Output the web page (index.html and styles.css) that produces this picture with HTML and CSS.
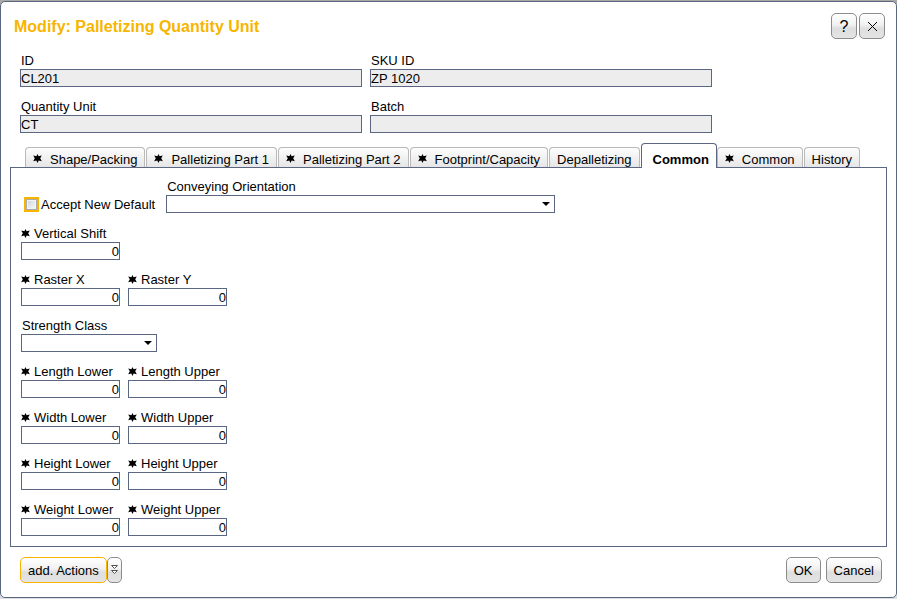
FILE: index.html
```html
<!DOCTYPE html>
<html lang="en">
<head>
<meta charset="utf-8">
<title>Modify: Palletizing Quantity Unit</title>
<link rel="stylesheet" href="styles.css">
</head>
<body>
<svg class="defs" aria-hidden="true">
  <symbol id="star" viewBox="0 0 9 9"><path d="M4.5 0 L5.6 2.2 L8.8 1.6 L7.2 4.3 L8.8 7.2 L5.7 6.6 L4.5 9 L3.3 6.6 L.2 7.2 L1.8 4.3 L.2 1.6 L3.4 2.2 Z"/></symbol>
</svg>
<main class="dialog">
  <header class="titlebar">
    <h1 class="title">Modify: Palletizing Quantity Unit</h1>
    <div class="window-buttons">
      <button class="btn btn-icon" type="button">?</button>
      <button class="btn btn-icon" type="button" aria-label="Close"><svg class="close" viewBox="0 0 11 11"><path d="M1 1 L10 10 M10 1 L1 10"/></svg></button>
    </div>
  </header>

  <form class="form">
    <div class="summary">
      <div class="field"><label for="id">ID</label><input id="id" type="text" value="CL201" readonly></div>
      <div class="field"><label for="sku">SKU ID</label><input id="sku" type="text" value="ZP 1020" readonly></div>
      <div class="field"><label for="qu">Quantity Unit</label><input id="qu" type="text" value="CT" readonly></div>
      <div class="field"><label for="batch">Batch</label><input id="batch" type="text" readonly></div>
    </div>

    <div class="tabs" role="tablist">
      <button class="tab" type="button" role="tab"><svg class="star"><use href="#star"/></svg>Shape/Packing</button>
      <button class="tab" type="button" role="tab"><svg class="star"><use href="#star"/></svg>Palletizing Part 1</button>
      <button class="tab" type="button" role="tab"><svg class="star"><use href="#star"/></svg>Palletizing Part 2</button>
      <button class="tab" type="button" role="tab"><svg class="star"><use href="#star"/></svg>Footprint/Capacity</button>
      <button class="tab" type="button" role="tab">Depalletizing</button>
      <button class="tab tab-active" type="button" role="tab" aria-selected="true">Common</button>
      <button class="tab" type="button" role="tab"><svg class="star"><use href="#star"/></svg>Common</button>
      <button class="tab" type="button" role="tab">History</button>
    </div>

    <section class="panel">
      <div class="row row-first">
        <label class="check"><input type="checkbox">Accept New Default</label>
        <div class="field field-wide"><label for="conv">Conveying Orientation</label><select id="conv"><option></option></select></div>
      </div>
      <div class="row">
        <div class="field num"><label for="vs"><svg class="star"><use href="#star"/></svg>Vertical Shift</label><input id="vs" type="text" value="0"></div>
      </div>
      <div class="row">
        <div class="field num"><label for="rx"><svg class="star"><use href="#star"/></svg>Raster X</label><input id="rx" type="text" value="0"></div>
        <div class="field num"><label for="ry"><svg class="star"><use href="#star"/></svg>Raster Y</label><input id="ry" type="text" value="0"></div>
      </div>
      <div class="row">
        <div class="field field-class"><label for="sc">Strength Class</label><select id="sc"><option></option></select></div>
      </div>
      <div class="row">
        <div class="field num"><label for="ll"><svg class="star"><use href="#star"/></svg>Length Lower</label><input id="ll" type="text" value="0"></div>
        <div class="field num"><label for="lu"><svg class="star"><use href="#star"/></svg>Length Upper</label><input id="lu" type="text" value="0"></div>
      </div>
      <div class="row">
        <div class="field num"><label for="wl"><svg class="star"><use href="#star"/></svg>Width Lower</label><input id="wl" type="text" value="0"></div>
        <div class="field num"><label for="wu"><svg class="star"><use href="#star"/></svg>Width Upper</label><input id="wu" type="text" value="0"></div>
      </div>
      <div class="row">
        <div class="field num"><label for="hl"><svg class="star"><use href="#star"/></svg>Height Lower</label><input id="hl" type="text" value="0"></div>
        <div class="field num"><label for="hu"><svg class="star"><use href="#star"/></svg>Height Upper</label><input id="hu" type="text" value="0"></div>
      </div>
      <div class="row">
        <div class="field num"><label for="gl"><svg class="star"><use href="#star"/></svg>Weight Lower</label><input id="gl" type="text" value="0"></div>
        <div class="field num"><label for="gu"><svg class="star"><use href="#star"/></svg>Weight Upper</label><input id="gu" type="text" value="0"></div>
      </div>
    </section>

    <footer class="actions">
      <div class="split">
        <button class="btn btn-focus" type="button">add. Actions</button>
        <button class="btn btn-more" type="button" aria-label="More actions"><svg class="chevrons" viewBox="0 0 7 10"><path d="M.5 .5 H6.5 L3.5 3.5 Z M.5 5.5 H6.5 L3.5 8.5 Z"/></svg></button>
      </div>
      <div class="confirm">
        <button class="btn" type="button">OK</button>
        <button class="btn" type="button">Cancel</button>
      </div>
    </footer>
  </form>
</main>
</body>
</html>
```

FILE: styles.css
```css
:root {
  --line: #5a6682;
  --accent: #f7b500;
}

* { box-sizing: border-box; }

body {
  margin: 0;
  padding: 1px 0;
  background: linear-gradient(#a9a9a4 4px, #dcdee3 4px);
  color: #000;
  font: 13px/15px "Liberation Sans", Arial, sans-serif;
}

.defs { position: absolute; width: 0; height: 0; }

.dialog {
  padding: 11px 9px 14px;
  border: 1px solid var(--line);
  border-radius: 5px;
  background: #fff;
}

.titlebar {
  display: flex;
  justify-content: space-between;
  padding: 0 2px 0 4px;
}

.title {
  margin: 5px 0 0;
  color: var(--accent);
  font-size: 16px;
  line-height: 18px;
}

.window-buttons { display: flex; gap: 2px; }

button, input, select { margin: 0; color: inherit; font: inherit; }

.btn {
  height: 26px;
  padding: 0 7px;
  border: 1px solid #8c8c8c;
  border-radius: 5px;
  background: linear-gradient(#fff, #f1f1f1 45%, #dedede 60%, #e4e4e4);
}

.btn-icon { width: 26px; padding: 0; font-size: 16px; }
.btn-focus { border-color: var(--accent); }
.btn-more { width: 15px; padding: 0; }

.close { width: 11px; height: 11px; fill: none; stroke: #000; }
.chevrons { width: 7px; height: 10px; fill: #fff; stroke: #555; }

.summary {
  display: grid;
  grid-template-columns: repeat(2, minmax(0, 342px));
  gap: 12px 8px;
  padding: 14px 10px 0;
}

.field { display: flex; flex-direction: column; gap: 1px; }

.field label { display: flex; align-items: center; padding-left: 1px; }

.field input, .field select {
  width: 100%;
  height: 18px;
  padding: 0;
  border: 1px solid var(--line);
  border-radius: 0;
  background: #fff;
}

.field input[readonly] { background: #ededed; }
.num { width: 99px; }
.field.num label { padding-left: 0; }
.num input { text-align: right; }

.field select {
  appearance: none;
  background: #fff url("data:image/svg+xml,%3Csvg xmlns='http://www.w3.org/2000/svg' width='8' height='4'%3E%3Cpath d='M0 0h8L4 4z'/%3E%3C/svg%3E") no-repeat right 4px center;
}

.star { flex: none; width: 9px; height: 9px; margin-right: 4px; }

.tabs {
  display: flex;
  align-items: flex-end;
  margin-top: 10px;
  padding-left: 15px;
}

.tab {
  display: flex;
  align-items: center;
  height: 20px;
  margin-right: 1px;
  padding: 4px 7px 0;
  border: 1px solid #b9b9b9;
  border-bottom: 0;
  border-radius: 4px 4px 0 0;
  background: linear-gradient(#fdfdfd, #e6e6e6);
}

.tab .star { margin: 0 8px 2px 0; }

.tab-active {
  position: relative;
  height: 25px;
  margin: 0 0 -1px;
  padding: 7px 7px 0 11px;
  border-color: var(--line);
  background: #fff;
  font-weight: bold;
}

.panel {
  display: flex;
  flex-direction: column;
  gap: 12px;
  padding: 11px 10px 10px;
  border: 1px solid var(--line);
}

.row { display: flex; gap: 8px; }
.row-first { align-items: flex-end; gap: 11px; margin-bottom: 1px; }

.field-wide { width: 389px; }
.field-class { width: 136px; }

.check {
  display: flex;
  align-items: center;
  gap: 2px;
  padding: 0 0 1px 3px;
}

.check input {
  appearance: none;
  width: 15px;
  height: 15px;
  border: 2px solid var(--accent);
  background: linear-gradient(135deg, #c9ced6, #fff);
  box-shadow: inset 0 0 0 1px #a9abad, inset 0 0 0 2px #f4f4f4;
}

.actions {
  display: flex;
  justify-content: space-between;
  padding: 10px 5px 0 10px;
}

.split { display: flex; }
.confirm { display: flex; gap: 5px; }
```
